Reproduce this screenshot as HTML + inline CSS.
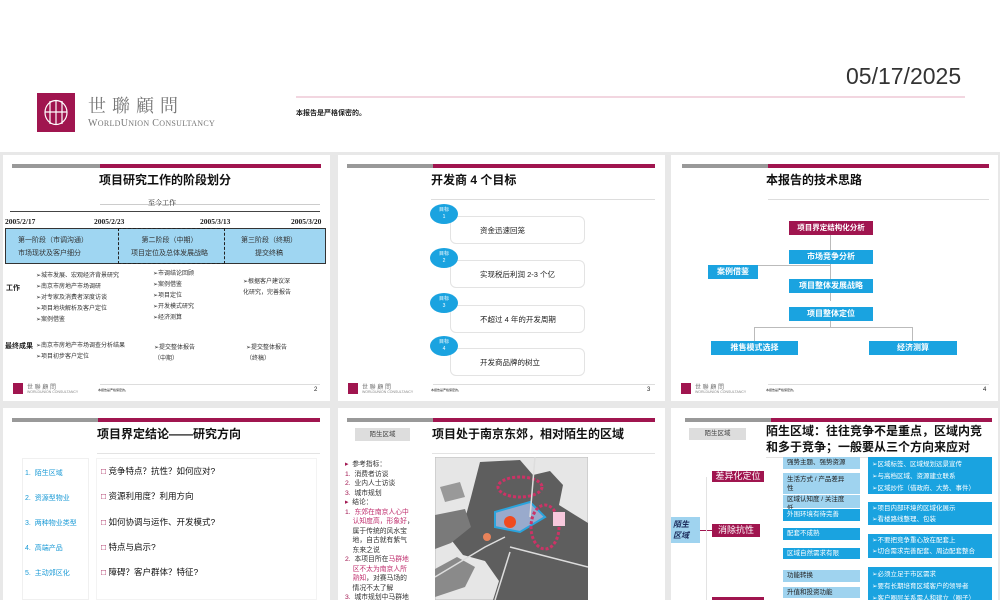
<!DOCTYPE html>
<html><head><meta charset="utf-8"><style>
*{margin:0;padding:0;box-sizing:border-box}
body{width:1000px;height:600px;overflow:hidden;background:#fff;font-family:"Liberation Sans","Noto Sans CJK SC",sans-serif;position:relative;color:#222}
.a{position:absolute;white-space:nowrap}
.sl{position:absolute;background:#fff;overflow:hidden}
.gb{position:absolute;height:4px;background:#999}
.cb{position:absolute;height:4px;background:#a0154f}
.t{position:absolute;font-weight:bold;font-size:12px;white-space:nowrap;color:#111}
.s{font-size:6px;color:#333}
.bl{position:absolute;background:#1aa3e0;color:#fff;font-size:8px;text-align:center;font-weight:bold}
.lb{position:absolute;background:#9fd3ef;color:#222;font-size:6.5px;padding-left:4px;line-height:11px}
.db{position:absolute;background:#1aa3e0;color:#fff;font-size:6.5px;padding:2px 4px;line-height:12px}
.cr{position:absolute;background:#a0154f;color:#fff;font-size:10px;text-align:center}
</style></head><body>
<!-- header -->
<div class="a" style="left:846px;top:63px;font-size:23px;color:#333">05/17/2025</div>
<div class="a" style="left:296px;top:96px;width:669px;height:2px;background:#f2d6e0"></div>
<div class="a" style="left:296px;top:108px;font-size:7px;font-weight:bold">本报告是严格保密的。</div>
<div class="a" style="left:37px;top:93px;width:38px;height:39px;background:#a0154f"></div>
<svg class="a" style="left:37px;top:93px" width="38" height="39"><g fill="none" stroke="#fff" stroke-width="1.2"><ellipse cx="19" cy="19.5" rx="11" ry="12"/><line x1="13" y1="8" x2="13" y2="31"/><line x1="19" y1="7" x2="19" y2="32"/><line x1="25" y1="8" x2="25" y2="31"/><line x1="8" y1="19" x2="30" y2="19"/></g></svg>
<div class="a" style="left:88px;top:92px;font-size:18px;letter-spacing:6px;color:#777;font-family:'Liberation Serif','Noto Serif CJK SC',serif">世聯顧問</div>
<div class="a" style="left:88px;top:118px;font-size:10px;color:#777;font-family:'Liberation Serif',serif;letter-spacing:.3px">W<span style="font-size:8px">ORLD</span>U<span style="font-size:8px">NION</span> C<span style="font-size:8px">ONSULTANCY</span></div>
<div class="a" style="left:0;top:152px;width:1000px;height:448px;background:#e8e8e8"></div>

<!-- slide 2 -->
<div class="sl" style="left:3px;top:155px;width:327px;height:246px">
<div class="gb" style="left:9px;top:9px;width:88px"></div><div class="cb" style="left:97px;top:9px;width:221px"></div>
<div class="t" style="left:96px;top:16px">项目研究工作的阶段划分</div>
<div class="a" style="left:97px;top:49px;width:220px;height:1px;background:#ccc"></div>
<div class="a" style="left:145px;top:43px;font-size:7px;font-family:'Noto Serif CJK SC',serif">至今工作</div>
<div class="a" style="left:7px;top:56px;width:310px;height:1px;background:#444"></div>
<div class="a" style="left:2px;top:62px;font-size:7.5px;font-weight:bold;font-family:'Liberation Serif',serif">2005/2/17</div>
<div class="a" style="left:91px;top:62px;font-size:7.5px;font-weight:bold;font-family:'Liberation Serif',serif">2005/2/23</div>
<div class="a" style="left:197px;top:62px;font-size:7.5px;font-weight:bold;font-family:'Liberation Serif',serif">2005/3/13</div>
<div class="a" style="left:288px;top:62px;font-size:7.5px;font-weight:bold;font-family:'Liberation Serif',serif">2005/3/20</div>
<div class="a" style="left:2px;top:73px;width:321px;height:36px;background:#9fd6f2;border:1px solid #333"></div>
<div class="a" style="left:115px;top:73px;width:107px;height:36px;border:1px dashed #222"></div>
<div class="a s" style="left:15px;top:79px;font-size:7px;line-height:13px">第一阶段（市调沟通）<br>市场现状及客户细分</div>
<div class="a s" style="left:128px;top:79px;font-size:7px;line-height:13px;text-align:center">第二阶段（中期）<br>项目定位及总体发展战略</div>
<div class="a s" style="left:238px;top:79px;font-size:7px;line-height:13px;text-align:center">第三阶段（终期）<br>提交终稿</div>
<div class="a" style="left:3px;top:128px;font-size:7px;font-weight:bold">工作</div>
<div class="a s" style="left:33px;top:116px;line-height:11px">➢城市发展、宏观经济背景研究<br>➢南京市房地产市场调研<br>➢对专家及消费者深度访谈<br>➢项目地块解析及客户定位<br>➢案例借鉴</div>
<div class="a s" style="left:150px;top:114px;line-height:11px">➢市调结论回顾<br>➢案例借鉴<br>➢项目定位<br>➢开发模式研究<br>➢经济测算</div>
<div class="a s" style="left:240px;top:122px;line-height:11px">➢根据客户建议深<br>化研究，完善报告</div>
<div class="a" style="left:2px;top:186px;font-size:7px;font-weight:bold">最终成果</div>
<div class="a s" style="left:33px;top:186px;line-height:11px">➢南京市房地产市场调查分析结果<br>➢项目初步客户定位</div>
<div class="a s" style="left:151px;top:188px;line-height:11px">➢提交整体报告<br>（中期）</div>
<div class="a s" style="left:243px;top:188px;line-height:11px">➢提交整体报告<br>（终稿）</div>
<div class="a" style="left:97px;top:229px;width:220px;height:1px;background:#ddd"></div>
<div class="a" style="left:10px;top:228px;width:10px;height:11px;background:#a0154f"></div>
<div class="a" style="left:24px;top:227px;font-size:6px;color:#777">世 聯 顧 問</div>
<div class="a" style="left:24px;top:235px;font-size:3.5px;color:#888">WORLDUNION CONSULTANCY</div>
<div class="a" style="left:95px;top:233px;font-size:3px">本报告是严格保密的。</div>
<div class="a" style="left:311px;top:232px;font-size:6px">2</div>
</div>

<!-- slide 3 -->
<div class="sl" style="left:338px;top:155px;width:327px;height:246px">
<div class="gb" style="left:9px;top:9px;width:86px"></div><div class="cb" style="left:95px;top:9px;width:222px"></div>
<div class="t" style="left:93px;top:16px">开发商 4 个目标</div>
<div class="a" style="left:93px;top:44px;width:224px;height:1px;background:#ddd"></div>
<div class="a" style="left:112px;top:61px;width:135px;height:28px;border:1px solid #e3e3e3;border-radius:6px"></div>
<div class="a" style="left:112px;top:105px;width:135px;height:28px;border:1px solid #e3e3e3;border-radius:6px"></div>
<div class="a" style="left:112px;top:150px;width:135px;height:28px;border:1px solid #e3e3e3;border-radius:6px"></div>
<div class="a" style="left:112px;top:193px;width:135px;height:28px;border:1px solid #e3e3e3;border-radius:6px"></div>
<div class="a" style="left:92px;top:49px;width:28px;height:20px;border-radius:50%;background:#1aa3e0;color:#fff;font-size:5px;text-align:center;line-height:7px;padding-top:3px">目标<br>1</div>
<div class="a" style="left:92px;top:93px;width:28px;height:20px;border-radius:50%;background:#1aa3e0;color:#fff;font-size:5px;text-align:center;line-height:7px;padding-top:3px">目标<br>2</div>
<div class="a" style="left:92px;top:138px;width:28px;height:20px;border-radius:50%;background:#1aa3e0;color:#fff;font-size:5px;text-align:center;line-height:7px;padding-top:3px">目标<br>3</div>
<div class="a" style="left:92px;top:181px;width:28px;height:20px;border-radius:50%;background:#1aa3e0;color:#fff;font-size:5px;text-align:center;line-height:7px;padding-top:3px">目标<br>4</div>
<div class="a" style="left:142px;top:70px;font-size:7.5px">资金迅速回笼</div>
<div class="a" style="left:142px;top:114px;font-size:7.5px">实现税后利润 2-3 个亿</div>
<div class="a" style="left:142px;top:159px;font-size:7.5px">不超过 4 年的开发周期</div>
<div class="a" style="left:142px;top:202px;font-size:7.5px">开发商品牌的树立</div>
<div class="a" style="left:95px;top:229px;width:222px;height:1px;background:#ddd"></div>
<div class="a" style="left:10px;top:228px;width:10px;height:11px;background:#a0154f"></div>
<div class="a" style="left:24px;top:227px;font-size:6px;color:#777">世 聯 顧 問</div>
<div class="a" style="left:24px;top:235px;font-size:3.5px;color:#888">WORLDUNION CONSULTANCY</div>
<div class="a" style="left:93px;top:233px;font-size:3px">本报告是严格保密的。</div>
<div class="a" style="left:309px;top:232px;font-size:6px">3</div>
</div>

<!-- slide 4 -->
<div class="sl" style="left:671px;top:155px;width:327px;height:246px">
<div class="gb" style="left:11px;top:9px;width:86px"></div><div class="cb" style="left:97px;top:9px;width:221px"></div>
<div class="t" style="left:95px;top:16px">本报告的技术思路</div>
<div class="a" style="left:97px;top:44px;width:221px;height:1px;background:#ddd"></div>
<div class="cr" style="left:118px;top:66px;width:84px;height:14px;font-size:7.5px;line-height:14px;font-weight:bold">项目界定结构化分析</div>
<div class="a" style="left:159px;top:80px;width:1px;height:66px;background:#bbb"></div>
<div class="a" style="left:87px;top:110px;width:72px;height:1px;background:#bbb"></div>
<div class="bl" style="left:118px;top:95px;width:84px;height:14px;line-height:14px">市场竞争分析</div>
<div class="bl" style="left:37px;top:110px;width:50px;height:14px;line-height:14px">案例借鉴</div>
<div class="bl" style="left:118px;top:124px;width:84px;height:14px;line-height:14px">项目整体发展战略</div>
<div class="bl" style="left:118px;top:152px;width:84px;height:14px;line-height:14px">项目整体定位</div>
<div class="a" style="left:159px;top:166px;width:1px;height:6px;background:#bbb"></div>
<div class="a" style="left:83px;top:172px;width:158px;height:1px;background:#bbb"></div>
<div class="a" style="left:83px;top:172px;width:1px;height:14px;background:#bbb"></div>
<div class="a" style="left:241px;top:172px;width:1px;height:14px;background:#bbb"></div>
<div class="bl" style="left:40px;top:186px;width:87px;height:14px;line-height:14px">推售模式选择</div>
<div class="bl" style="left:198px;top:186px;width:88px;height:14px;line-height:14px">经济测算</div>
<div class="a" style="left:97px;top:229px;width:221px;height:1px;background:#ddd"></div>
<div class="a" style="left:10px;top:228px;width:10px;height:11px;background:#a0154f"></div>
<div class="a" style="left:24px;top:227px;font-size:6px;color:#777">世 聯 顧 問</div>
<div class="a" style="left:24px;top:235px;font-size:3.5px;color:#888">WORLDUNION CONSULTANCY</div>
<div class="a" style="left:95px;top:233px;font-size:3px">本报告是严格保密的。</div>
<div class="a" style="left:312px;top:232px;font-size:6px">4</div>
</div>

<!-- slide 5 -->
<div class="sl" style="left:3px;top:408px;width:327px;height:192px">
<div class="gb" style="left:9px;top:10px;width:86px"></div><div class="cb" style="left:95px;top:10px;width:222px"></div>
<div class="t" style="left:94px;top:17px">项目界定结论——研究方向</div>
<div class="a" style="left:94px;top:45px;width:223px;height:1px;background:#e3e3e3"></div>
<div class="a" style="left:19px;top:50px;width:67px;height:142px;border:1px solid #f0f0f0"></div>
<div class="a" style="left:93px;top:50px;width:221px;height:142px;border:1px solid #f3f3f3"></div>
<div class="a" style="left:22px;top:53px;font-size:7px;color:#1a9ad6;line-height:25px">1.&nbsp; 陌生区域<br>2.&nbsp; 资源型物业<br>3.&nbsp; 两种物业类型<br>4.&nbsp; 高端产品<br>5.&nbsp; 主动郊区化</div>
<div class="a" style="left:98px;top:51px;font-size:8.5px;line-height:25.3px;color:#111"><span style="color:#a0154f">□</span> 竞争特点？抗性？如何应对?<br><span style="color:#a0154f">□</span> 资源利用度？利用方向<br><span style="color:#a0154f">□</span> 如何协调与运作、开发模式?<br><span style="color:#a0154f">□</span> 特点与启示?<br><span style="color:#a0154f">□</span> 障碍？客户群体？特征?</div>
</div>

<!-- slide 6 -->
<div class="sl" style="left:338px;top:408px;width:327px;height:192px">
<div class="gb" style="left:9px;top:10px;width:86px"></div><div class="cb" style="left:95px;top:10px;width:222px"></div>
<div class="a" style="left:17px;top:20px;width:55px;height:13px;background:#ddd;font-size:6.5px;text-align:center;line-height:13px;color:#444">陌生区域</div>
<div class="t" style="left:94px;top:17px">项目处于南京东郊，相对陌生的区域</div>
<div class="a" style="left:94px;top:45px;width:223px;height:1px;background:#e3e3e3"></div>
<div class="a" style="left:7px;top:52px;font-size:6.8px;line-height:9.5px;color:#333"><span style="color:#a0154f">▸</span>&nbsp; 参考指标：<br><span style="color:#a0154f">1.</span>&nbsp; 消费者访谈<br><span style="color:#a0154f">2.</span>&nbsp; 业内人士访谈<br><span style="color:#a0154f">3.</span>&nbsp; 城市规划<br><span style="color:#a0154f">▸</span>&nbsp; 结论：<br><span style="color:#a0154f">1.</span>&nbsp; <span style="color:#c0306f">东郊在南京人心中</span><br>&nbsp;&nbsp;&nbsp;&nbsp;<span style="color:#c0306f">认知度高，形象好</span>，<br>&nbsp;&nbsp;&nbsp;&nbsp;属于传统的风水宝<br>&nbsp;&nbsp;&nbsp;&nbsp;地，自古就有紫气<br>&nbsp;&nbsp;&nbsp;&nbsp;东来之说<br><span style="color:#a0154f">2.</span>&nbsp; 本项目所在<span style="color:#c0306f">马群地</span><br>&nbsp;&nbsp;&nbsp;&nbsp;<span style="color:#c0306f">区不太为南京人所</span><br>&nbsp;&nbsp;&nbsp;&nbsp;<span style="color:#c0306f">熟知</span>，对赛马场的<br>&nbsp;&nbsp;&nbsp;&nbsp;情况不太了解<br><span style="color:#a0154f">3.</span>&nbsp; 城市规划中马群地<br>&nbsp;&nbsp;&nbsp;&nbsp;区原来是村庄，现</div>
<svg class="a" style="left:97px;top:49px" width="153" height="143">
<rect x="0" y="0" width="153" height="143" fill="#e6e6e6" stroke="#bbb"/>
<path d="M45 5 L85 3 L98 18 L115 14 L128 28 L124 48 L140 58 L153 66 L153 143 L58 143 L64 124 L50 104 L28 98 L14 80 L30 62 L36 40 Z" fill="#5e5e5e"/>
<path d="M0 58 L30 52 L36 70 L16 86 L0 92 Z" fill="#7a7a7a"/>
<path d="M0 112 L22 100 L40 110 L30 130 L0 140 Z" fill="#8a8a8a"/>
<path d="M5 30 L25 25 L30 40 L10 45 Z" fill="#999"/>
<path d="M60 55 L95 45 L110 60 L85 75 L60 70 Z" fill="#9ac" stroke="#2aa4dd" stroke-width="2"/>
<circle cx="75" cy="65" r="6" fill="#f04a20"/>
<circle cx="52" cy="80" r="4" fill="#e9835a"/>
<ellipse cx="85" cy="30" rx="22" ry="10" fill="none" stroke="#c36" stroke-width="3" stroke-dasharray="3 2"/>
<ellipse cx="110" cy="70" rx="14" ry="22" fill="none" stroke="#c36" stroke-width="3" stroke-dasharray="3 2"/>
<rect x="118" y="55" width="12" height="14" fill="#f7c8dc"/>
<path d="M0 120 L50 90 L70 80 M60 143 L75 95 M100 0 L95 60 M75 90 L153 110" stroke="#ddd" stroke-width="1.5" fill="none"/>
</svg>
</div>

<!-- slide 7 -->
<div class="sl" style="left:671px;top:408px;width:327px;height:192px">
<div class="gb" style="left:14px;top:10px;width:86px"></div><div class="cb" style="left:100px;top:10px;width:221px"></div>
<div class="a" style="left:18px;top:20px;width:57px;height:12px;background:#ddd;font-size:6.5px;text-align:center;line-height:12px;color:#444">陌生区域</div>
<div class="a" style="left:95px;top:15px;font-size:12px;font-weight:bold;line-height:16px;color:#111">陌生区域：往往竞争不是重点，区域内竞<br>和多于竞争；一般要从三个方向来应对</div>
<div class="a" style="left:95px;top:49px;width:226px;height:1px;background:#e3e3e3"></div>
<div class="a" style="left:-1px;top:109px;width:30px;height:26px;background:#9fd3ef;font-size:8px;font-weight:bold;font-style:italic;line-height:11px;padding:2px 0 0 3px;color:#1a2a5a">陌生<br>区域</div>
<div class="a" style="left:29px;top:122px;width:12px;height:1px;background:#a0154f"></div>
<div class="a" style="left:35px;top:69px;width:1px;height:123px;background:#e3e3e3"></div>
<div class="cr" style="left:41px;top:63px;width:52px;height:11px;line-height:11px;font-size:9px">差异化定位</div>
<div class="cr" style="left:41px;top:116px;width:48px;height:13px;line-height:13px;font-size:9px">消除抗性</div>
<div class="cr" style="left:41px;top:189px;width:52px;height:11px"></div>
<div class="lb" style="left:112px;top:49px;width:77px;height:12px">强势主题、强势资源</div>
<div class="lb" style="left:112px;top:65px;width:77px;height:21px;line-height:9px;padding-top:2px">生活方式 / 产品差异<br>性</div>
<div class="lb" style="left:112px;top:87px;width:77px;height:13px;line-height:9px">区域认知度 / 关注度<br>低</div>
<div class="db" style="left:112px;top:101px;width:77px;height:12px;line-height:10px;padding:1px 4px">外围环境有待完善</div>
<div class="db" style="left:112px;top:120px;width:77px;height:12px;line-height:10px;padding:1px 4px">配套不成熟</div>
<div class="db" style="left:112px;top:140px;width:77px;height:11px;line-height:9px;padding:1px 4px">区域自然需求有限</div>
<div class="lb" style="left:112px;top:162px;width:77px;height:12px">功能转换</div>
<div class="lb" style="left:112px;top:179px;width:77px;height:11px">升值和投资功能</div>
<div class="db" style="left:197px;top:49px;width:124px;height:37px">➢区域标签、区域规划远景宣传<br>➢与高档区域、资源建立联系<br>➢区域炒作（借政府、大势、事件）</div>
<div class="db" style="left:197px;top:94px;width:124px;height:23px;line-height:11px;padding-top:1px">➢项目内部环境的区域化展示<br>➢看楼路线整理、包装</div>
<div class="db" style="left:197px;top:126px;width:124px;height:24px;line-height:11px;padding-top:1px">➢不要把竞争重心放在配套上<br>➢切合需求完善配套、周边配套整合</div>
<div class="db" style="left:197px;top:159px;width:124px;height:40px;line-height:12px">➢必须立足于市区需求<br>➢要有长期培育区域客户的领导者<br>➢客户圈层关系需人和建立（圈子）</div>
</div>
</body></html>
